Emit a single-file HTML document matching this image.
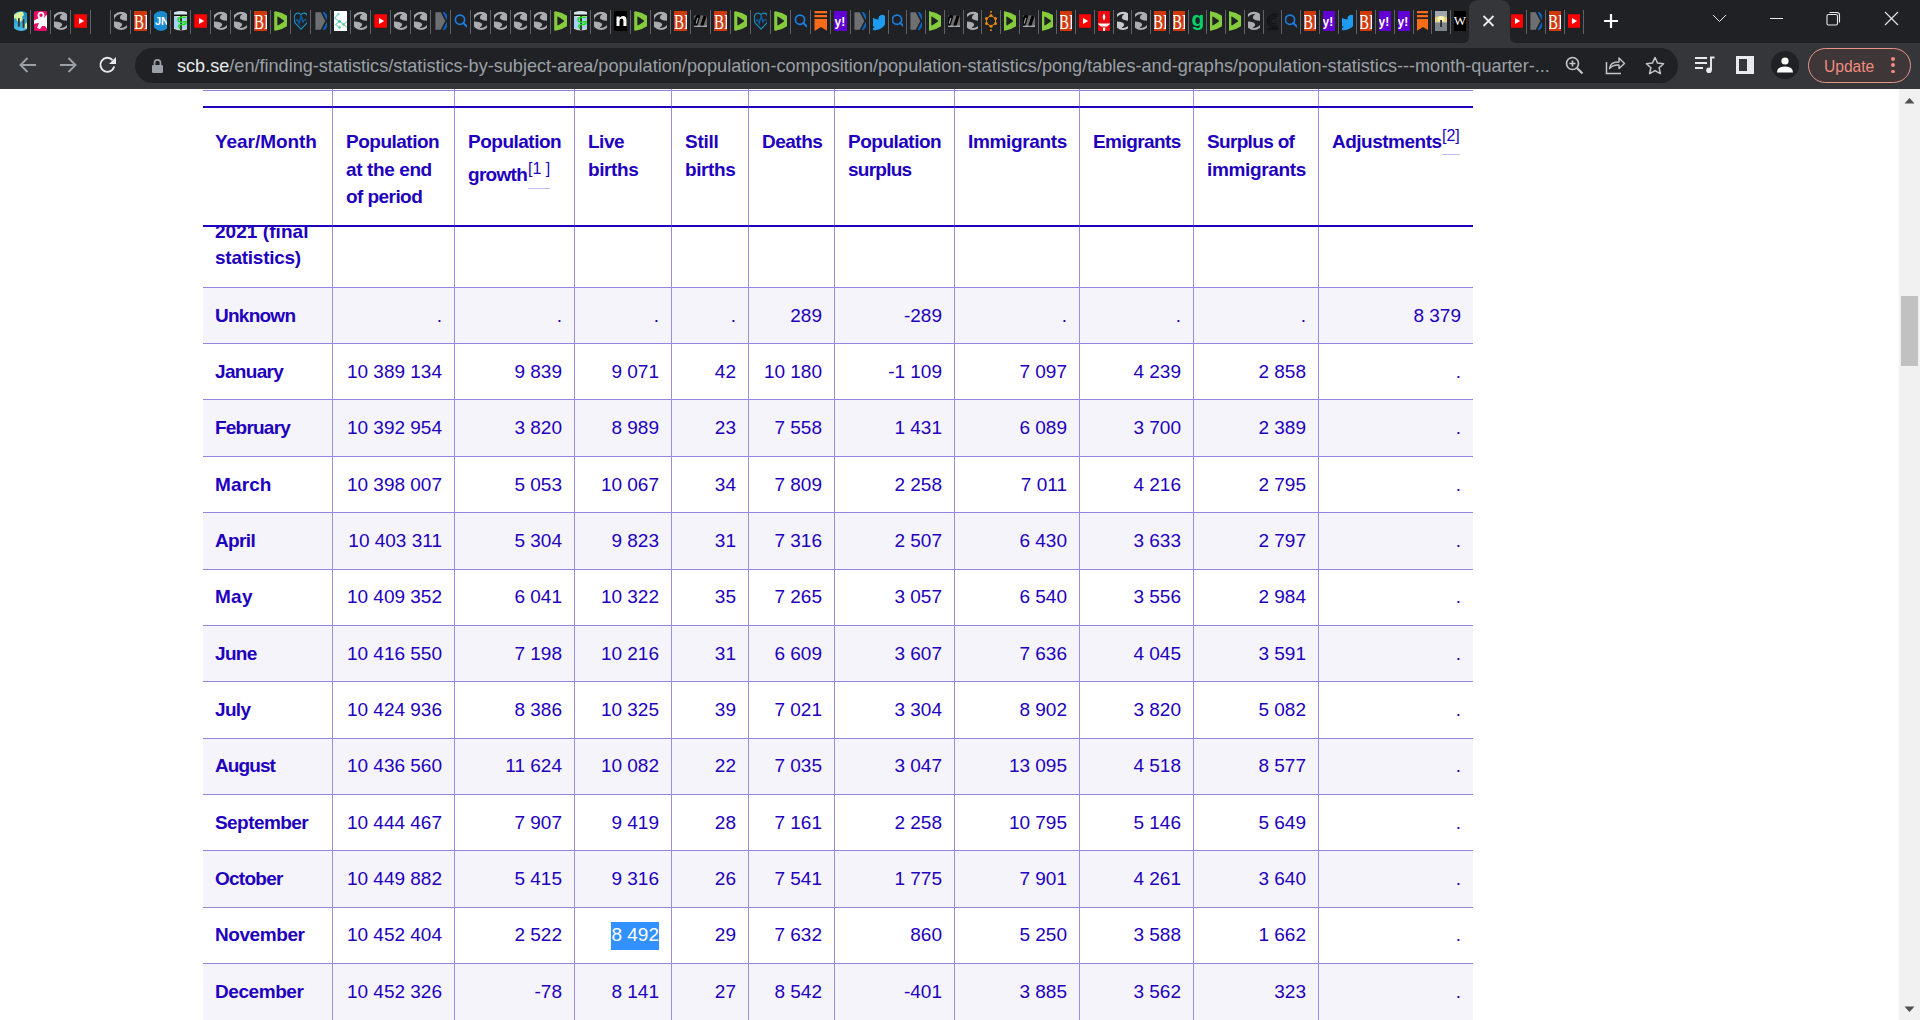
<!DOCTYPE html><html><head><meta charset="utf-8"><style>
*{margin:0;padding:0;box-sizing:border-box}
html,body{width:1920px;height:1020px;overflow:hidden;background:#fff}
body{position:relative;font-family:"Liberation Sans",sans-serif}
.a{position:absolute}
#tabs{left:0;top:0;width:1920px;height:43px;background:#202124}
#tb{left:0;top:43px;width:1920px;height:46px;background:#35363a}
.sep{position:absolute;top:10px;width:1px;height:24px;background:#5f6368}
.fav{position:absolute;top:11px;height:20px;overflow:hidden}
.fav svg{position:absolute;top:0;width:20px;height:20px}
.t{position:absolute;white-space:nowrap;color:#1e00be;font-size:19px;line-height:27px}
.b{font-weight:bold}
.r{text-align:right}
.hl{position:absolute;height:1px;background:#9384de}
.vl{position:absolute;width:1px;background:#9a8ee3}
</style></head><body><div id="tabs" class="a"><div class="sep" style="left:30px"></div><div class="sep" style="left:50px"></div><div class="sep" style="left:70px"></div><div class="sep" style="left:90px"></div><div class="sep" style="left:110px"></div><div class="sep" style="left:130px"></div><div class="sep" style="left:150px"></div><div class="sep" style="left:170px"></div><div class="sep" style="left:190px"></div><div class="sep" style="left:210px"></div><div class="sep" style="left:230px"></div><div class="sep" style="left:250px"></div><div class="sep" style="left:270px"></div><div class="sep" style="left:290px"></div><div class="sep" style="left:310px"></div><div class="sep" style="left:330px"></div><div class="sep" style="left:350px"></div><div class="sep" style="left:370px"></div><div class="sep" style="left:390px"></div><div class="sep" style="left:410px"></div><div class="sep" style="left:430px"></div><div class="sep" style="left:450px"></div><div class="sep" style="left:470px"></div><div class="sep" style="left:490px"></div><div class="sep" style="left:510px"></div><div class="sep" style="left:530px"></div><div class="sep" style="left:550px"></div><div class="sep" style="left:570px"></div><div class="sep" style="left:590px"></div><div class="sep" style="left:610px"></div><div class="sep" style="left:630px"></div><div class="sep" style="left:650px"></div><div class="sep" style="left:670px"></div><div class="sep" style="left:690px"></div><div class="sep" style="left:710px"></div><div class="sep" style="left:730px"></div><div class="sep" style="left:750px"></div><div class="sep" style="left:770px"></div><div class="sep" style="left:790px"></div><div class="sep" style="left:810px"></div><div class="sep" style="left:830px"></div><div class="sep" style="left:850px"></div><div class="sep" style="left:869px"></div><div class="sep" style="left:888px"></div><div class="sep" style="left:906px"></div><div class="sep" style="left:925px"></div><div class="sep" style="left:944px"></div><div class="sep" style="left:963px"></div><div class="sep" style="left:981px"></div><div class="sep" style="left:1000px"></div><div class="sep" style="left:1019px"></div><div class="sep" style="left:1038px"></div><div class="sep" style="left:1056px"></div><div class="sep" style="left:1075px"></div><div class="sep" style="left:1094px"></div><div class="sep" style="left:1113px"></div><div class="sep" style="left:1131px"></div><div class="sep" style="left:1150px"></div><div class="sep" style="left:1169px"></div><div class="sep" style="left:1188px"></div><div class="sep" style="left:1206px"></div><div class="sep" style="left:1225px"></div><div class="sep" style="left:1244px"></div><div class="sep" style="left:1263px"></div><div class="sep" style="left:1281px"></div><div class="sep" style="left:1300px"></div><div class="sep" style="left:1319px"></div><div class="sep" style="left:1338px"></div><div class="sep" style="left:1356px"></div><div class="sep" style="left:1375px"></div><div class="sep" style="left:1394px"></div><div class="sep" style="left:1413px"></div><div class="sep" style="left:1431px"></div><div class="sep" style="left:1450px"></div><div class="sep" style="left:1526px"></div><div class="sep" style="left:1545px"></div><div class="sep" style="left:1564px"></div><div class="sep" style="left:1583px"></div><div class="fav" style="left:14.0px;width:13.0px"><svg viewBox="0 0 20 20" style="left:-3.5px"><defs><linearGradient id="gg" x1="0" y1="0" x2="0" y2="1"><stop offset="0" stop-color="#1487b8"/><stop offset="1" stop-color="#4cc0ea"/></linearGradient></defs><circle cx="10" cy="10" r="10" fill="url(#gg)"/><path d="M3 4q4-4 9-3l1 3-2 2 1 3-3 2-3-1-1-3-3 1z" fill="#d8f0a0"/><path d="M14 13l4-3 1 4-3 4-2-1z" fill="#d8f0a0"/><rect x="7" y="7" width="1.8" height="9" rx=".9" fill="#3a3232"/><rect x="11.6" y="8" width="1.8" height="9" rx=".9" fill="#3a3232"/></svg></div><div class="fav" style="left:34.0px;width:13.0px"><svg viewBox="0 0 20 20" style="left:-3.5px"><rect x="0" y="0" width="20" height="20" rx="6" fill="#ea0a6a"/><circle cx="10" cy="4.2" r="2.6" fill="none" stroke="#fff" stroke-width="1.8"/><path d="M2 10l6-3h5l5-6 2 2-4 6v3l4 5-3 2-3-4h-3l-2 3-3-1 2-5-6 1z" fill="#fff"/></svg></div><div class="fav" style="left:54.0px;width:13.0px"><svg viewBox="0 0 20 20" style="left:-3.5px"><circle cx="10" cy="9.9" r="9.1" fill="#a9acb1"/><path d="M3.1 10.4A6.9 6.9 0 0 1 11.4 3.1Q8.5 4.7 9 7.3Q10 9.6 16.9 9.8L16.9 11.5A6.9 6.9 0 0 1 8.7 16.8Q11.7 15.3 11 13Q10 10.7 3.1 10.4Z" fill="#202124"/></svg></div><div class="fav" style="left:74.0px;width:13.0px"><svg viewBox="0 0 20 20" style="left:-3.5px"><rect x="3.2" y="3.2" width="13.6" height="13.6" rx="1" fill="#f00"/><path d="M8 7l5.2 3L8 13z" fill="#fff"/></svg></div><div class="fav" style="left:114.0px;width:13.0px"><svg viewBox="0 0 20 20" style="left:-3.5px"><circle cx="10" cy="9.9" r="9.1" fill="#a9acb1"/><path d="M3.1 10.4A6.9 6.9 0 0 1 11.4 3.1Q8.5 4.7 9 7.3Q10 9.6 16.9 9.8L16.9 11.5A6.9 6.9 0 0 1 8.7 16.8Q11.7 15.3 11 13Q10 10.7 3.1 10.4Z" fill="#202124"/></svg></div><div class="fav" style="left:134.0px;width:13.0px"><svg viewBox="0 0 20 20" style="left:-3.5px"><rect x="0" y="0" width="20" height="20" fill="#cf3a0c"/><text x="3" y="17.6" font-family="Liberation Serif" font-size="20.5" fill="#fff" textLength="15" lengthAdjust="spacingAndGlyphs">BI</text></svg></div><div class="fav" style="left:154.0px;width:13.0px"><svg viewBox="0 0 20 20" style="left:-3.5px"><ellipse cx="10" cy="10" rx="9.2" ry="10" fill="#1a8cd2"/><text x="10.8" y="14.3" font-family="Liberation Sans" font-size="11" font-weight="bold" fill="#fff" text-anchor="middle" letter-spacing="-.3">JN</text></svg></div><div class="fav" style="left:174.0px;width:13.0px"><svg viewBox="0 0 20 20" style="left:-3.5px"><path d="M2 3.5h16v13.5q-8 4-16 0z" fill="#a8d0f6" stroke="#f0ead8" stroke-width=".8"/><ellipse cx="10" cy="3.2" rx="8" ry="2.6" fill="#cfe6fb" stroke="#f6f0e0" stroke-width=".9"/><path d="M3 4.3h14" stroke="#15120a" stroke-width="1.5"/><path d="M10 5v14" stroke="#2a2216" stroke-width="1.8"/><path d="M15.5 6.5q-9-1-8.5 2.5t8 1.5q1 3-4 3t-2 4" stroke="#22dd22" stroke-width="1.6" fill="none"/></svg></div><div class="fav" style="left:194.0px;width:13.0px"><svg viewBox="0 0 20 20" style="left:-3.5px"><rect x="3.2" y="3.2" width="13.6" height="13.6" rx="1" fill="#f00"/><path d="M8 7l5.2 3L8 13z" fill="#fff"/></svg></div><div class="fav" style="left:214.0px;width:13.0px"><svg viewBox="0 0 20 20" style="left:-3.5px"><circle cx="10" cy="9.9" r="9.1" fill="#a9acb1"/><path d="M3.1 10.4A6.9 6.9 0 0 1 11.4 3.1Q8.5 4.7 9 7.3Q10 9.6 16.9 9.8L16.9 11.5A6.9 6.9 0 0 1 8.7 16.8Q11.7 15.3 11 13Q10 10.7 3.1 10.4Z" fill="#202124"/></svg></div><div class="fav" style="left:234.0px;width:13.0px"><svg viewBox="0 0 20 20" style="left:-3.5px"><circle cx="10" cy="9.9" r="9.1" fill="#a9acb1"/><path d="M3.1 10.4A6.9 6.9 0 0 1 11.4 3.1Q8.5 4.7 9 7.3Q10 9.6 16.9 9.8L16.9 11.5A6.9 6.9 0 0 1 8.7 16.8Q11.7 15.3 11 13Q10 10.7 3.1 10.4Z" fill="#202124"/></svg></div><div class="fav" style="left:254.0px;width:13.0px"><svg viewBox="0 0 20 20" style="left:-3.5px"><rect x="0" y="0" width="20" height="20" fill="#cf3a0c"/><text x="3" y="17.6" font-family="Liberation Serif" font-size="20.5" fill="#fff" textLength="15" lengthAdjust="spacingAndGlyphs">BI</text></svg></div><div class="fav" style="left:274.0px;width:13.0px"><svg viewBox="0 0 20 20" style="left:-3.5px"><path d="M4.6 0.2Q3.2 0.2 3.2 1.6V18.4Q3.2 19.8 4.6 19.8Q12 18.4 16.6 14.8V5.2Q12 1.6 4.6 0.2Z" fill="#84cc3c"/><path d="M6.3 6.4Q6.3 5.2 7.4 5.8L12.6 9.2Q13.6 10 12.6 10.8L7.4 14.2Q6.3 14.8 6.3 13.6Z" fill="#202124"/></svg></div><div class="fav" style="left:294.0px;width:13.0px"><svg viewBox="0 0 20 20" style="left:-3.5px"><path d="M10 18.2L4.5 12.4Q3.3 10.9 3.3 7.5Q3.3 2.1 6.9 2.1Q9 2.1 10 3.7Q11 2.1 13.1 2.1Q16.7 2.1 16.7 7.5Q16.7 10.9 15.5 12.4Z" fill="none" stroke="#1a94c8" stroke-width="1.1"/><path d="M5 9.8L6.6 8.8L8.1 12.4L10.2 4.8L11.9 11L13.2 8.9H15.6" fill="none" stroke="#0f5ea8" stroke-width="1.3"/></svg></div><div class="fav" style="left:314.0px;width:13.0px"><svg viewBox="0 0 20 20" style="left:-3.5px"><path d="M4.4 1.2h5.3l4.6 8.8-4.6 8.8H4.4z" fill="#6e6f73"/><path d="M11.6 1H13.3Q16.4 3 16.4 6.5V8.9L15.5 8.7Z" fill="#0a64c0"/><path d="M11.6 19H13.3Q16.4 17 16.4 13.5V11.1L15.5 11.3Z" fill="#0a64c0"/></svg></div><div class="fav" style="left:334.0px;width:13.0px"><svg viewBox="0 0 20 20" style="left:-3.5px"><rect x="0" y="0" width="20" height="20" fill="#fff"/><path d="M7.5 3L3.5 7l5 3.5-4 3 4 3M8.5 10.5l4 3 4-3.5M12.5 13.5l4 3" stroke="#8ed8c8" stroke-width="1.2" fill="none"/><circle cx="7.5" cy="3" r="1.2" fill="#7cd0e0"/><circle cx="8.5" cy="10.5" r="1.3" fill="#2ec0b0"/><circle cx="12.5" cy="13.5" r="1.3" fill="#62cc78"/><circle cx="8.5" cy="16.5" r="1.3" fill="#58cc90"/></svg></div><div class="fav" style="left:354.0px;width:13.0px"><svg viewBox="0 0 20 20" style="left:-3.5px"><circle cx="10" cy="9.9" r="9.1" fill="#a9acb1"/><path d="M3.1 10.4A6.9 6.9 0 0 1 11.4 3.1Q8.5 4.7 9 7.3Q10 9.6 16.9 9.8L16.9 11.5A6.9 6.9 0 0 1 8.7 16.8Q11.7 15.3 11 13Q10 10.7 3.1 10.4Z" fill="#202124"/></svg></div><div class="fav" style="left:374.0px;width:13.0px"><svg viewBox="0 0 20 20" style="left:-3.5px"><rect x="3.2" y="3.2" width="13.6" height="13.6" rx="1" fill="#f00"/><path d="M8 7l5.2 3L8 13z" fill="#fff"/></svg></div><div class="fav" style="left:394.0px;width:13.0px"><svg viewBox="0 0 20 20" style="left:-3.5px"><circle cx="10" cy="9.9" r="9.1" fill="#a9acb1"/><path d="M3.1 10.4A6.9 6.9 0 0 1 11.4 3.1Q8.5 4.7 9 7.3Q10 9.6 16.9 9.8L16.9 11.5A6.9 6.9 0 0 1 8.7 16.8Q11.7 15.3 11 13Q10 10.7 3.1 10.4Z" fill="#202124"/></svg></div><div class="fav" style="left:414.0px;width:13.0px"><svg viewBox="0 0 20 20" style="left:-3.5px"><circle cx="10" cy="9.9" r="9.1" fill="#a9acb1"/><path d="M3.1 10.4A6.9 6.9 0 0 1 11.4 3.1Q8.5 4.7 9 7.3Q10 9.6 16.9 9.8L16.9 11.5A6.9 6.9 0 0 1 8.7 16.8Q11.7 15.3 11 13Q10 10.7 3.1 10.4Z" fill="#202124"/></svg></div><div class="fav" style="left:434.0px;width:13.0px"><svg viewBox="0 0 20 20" style="left:-3.5px"><path d="M4.4 1.2h5.3l4.6 8.8-4.6 8.8H4.4z" fill="#6e6f73"/><path d="M11.6 1H13.3Q16.4 3 16.4 6.5V8.9L15.5 8.7Z" fill="#0a64c0"/><path d="M11.6 19H13.3Q16.4 17 16.4 13.5V11.1L15.5 11.3Z" fill="#0a64c0"/></svg></div><div class="fav" style="left:454.0px;width:13.0px"><svg viewBox="0 0 20 20" style="left:-3.5px"><circle cx="9" cy="8.7" r="4.6" fill="none" stroke="#1a7ee0" stroke-width="1.7"/><path d="M12.3 12l3.6 3.6" stroke="#1a7ee0" stroke-width="1.9" stroke-linecap="round"/></svg></div><div class="fav" style="left:474.0px;width:13.0px"><svg viewBox="0 0 20 20" style="left:-3.5px"><circle cx="10" cy="9.9" r="9.1" fill="#a9acb1"/><path d="M3.1 10.4A6.9 6.9 0 0 1 11.4 3.1Q8.5 4.7 9 7.3Q10 9.6 16.9 9.8L16.9 11.5A6.9 6.9 0 0 1 8.7 16.8Q11.7 15.3 11 13Q10 10.7 3.1 10.4Z" fill="#202124"/></svg></div><div class="fav" style="left:494.0px;width:13.0px"><svg viewBox="0 0 20 20" style="left:-3.5px"><circle cx="10" cy="9.9" r="9.1" fill="#a9acb1"/><path d="M3.1 10.4A6.9 6.9 0 0 1 11.4 3.1Q8.5 4.7 9 7.3Q10 9.6 16.9 9.8L16.9 11.5A6.9 6.9 0 0 1 8.7 16.8Q11.7 15.3 11 13Q10 10.7 3.1 10.4Z" fill="#202124"/></svg></div><div class="fav" style="left:514.0px;width:13.0px"><svg viewBox="0 0 20 20" style="left:-3.5px"><circle cx="10" cy="9.9" r="9.1" fill="#a9acb1"/><path d="M3.1 10.4A6.9 6.9 0 0 1 11.4 3.1Q8.5 4.7 9 7.3Q10 9.6 16.9 9.8L16.9 11.5A6.9 6.9 0 0 1 8.7 16.8Q11.7 15.3 11 13Q10 10.7 3.1 10.4Z" fill="#202124"/></svg></div><div class="fav" style="left:534.0px;width:13.0px"><svg viewBox="0 0 20 20" style="left:-3.5px"><circle cx="10" cy="9.9" r="9.1" fill="#a9acb1"/><path d="M3.1 10.4A6.9 6.9 0 0 1 11.4 3.1Q8.5 4.7 9 7.3Q10 9.6 16.9 9.8L16.9 11.5A6.9 6.9 0 0 1 8.7 16.8Q11.7 15.3 11 13Q10 10.7 3.1 10.4Z" fill="#202124"/></svg></div><div class="fav" style="left:554.0px;width:13.0px"><svg viewBox="0 0 20 20" style="left:-3.5px"><path d="M4.6 0.2Q3.2 0.2 3.2 1.6V18.4Q3.2 19.8 4.6 19.8Q12 18.4 16.6 14.8V5.2Q12 1.6 4.6 0.2Z" fill="#84cc3c"/><path d="M6.3 6.4Q6.3 5.2 7.4 5.8L12.6 9.2Q13.6 10 12.6 10.8L7.4 14.2Q6.3 14.8 6.3 13.6Z" fill="#202124"/></svg></div><div class="fav" style="left:574.0px;width:13.0px"><svg viewBox="0 0 20 20" style="left:-3.5px"><path d="M2 3.5h16v13.5q-8 4-16 0z" fill="#a8d0f6" stroke="#f0ead8" stroke-width=".8"/><ellipse cx="10" cy="3.2" rx="8" ry="2.6" fill="#cfe6fb" stroke="#f6f0e0" stroke-width=".9"/><path d="M3 4.3h14" stroke="#15120a" stroke-width="1.5"/><path d="M10 5v14" stroke="#2a2216" stroke-width="1.8"/><path d="M15.5 6.5q-9-1-8.5 2.5t8 1.5q1 3-4 3t-2 4" stroke="#22dd22" stroke-width="1.6" fill="none"/></svg></div><div class="fav" style="left:594.0px;width:13.0px"><svg viewBox="0 0 20 20" style="left:-3.5px"><circle cx="10" cy="9.9" r="9.1" fill="#a9acb1"/><path d="M3.1 10.4A6.9 6.9 0 0 1 11.4 3.1Q8.5 4.7 9 7.3Q10 9.6 16.9 9.8L16.9 11.5A6.9 6.9 0 0 1 8.7 16.8Q11.7 15.3 11 13Q10 10.7 3.1 10.4Z" fill="#202124"/></svg></div><div class="fav" style="left:614.0px;width:13.0px"><svg viewBox="0 0 20 20" style="left:-3.5px"><rect x="0" y="0" width="20" height="20" rx="6" fill="#000"/><path d="M5.5 5.5h3v1.6q1.5-2 3.6-2 3.4 0 3.4 3.8V15h-3.1V9.5q0-1.9-1.7-1.9-2.2 0-2.2 2.6V15h-3z" fill="#fff"/></svg></div><div class="fav" style="left:634.0px;width:13.0px"><svg viewBox="0 0 20 20" style="left:-3.5px"><path d="M4.6 0.2Q3.2 0.2 3.2 1.6V18.4Q3.2 19.8 4.6 19.8Q12 18.4 16.6 14.8V5.2Q12 1.6 4.6 0.2Z" fill="#84cc3c"/><path d="M6.3 6.4Q6.3 5.2 7.4 5.8L12.6 9.2Q13.6 10 12.6 10.8L7.4 14.2Q6.3 14.8 6.3 13.6Z" fill="#202124"/></svg></div><div class="fav" style="left:654.0px;width:13.0px"><svg viewBox="0 0 20 20" style="left:-3.5px"><circle cx="10" cy="9.9" r="9.1" fill="#a9acb1"/><path d="M3.1 10.4A6.9 6.9 0 0 1 11.4 3.1Q8.5 4.7 9 7.3Q10 9.6 16.9 9.8L16.9 11.5A6.9 6.9 0 0 1 8.7 16.8Q11.7 15.3 11 13Q10 10.7 3.1 10.4Z" fill="#202124"/></svg></div><div class="fav" style="left:674.0px;width:13.0px"><svg viewBox="0 0 20 20" style="left:-3.5px"><rect x="0" y="0" width="20" height="20" fill="#cf3a0c"/><text x="3" y="17.6" font-family="Liberation Serif" font-size="20.5" fill="#fff" textLength="15" lengthAdjust="spacingAndGlyphs">BI</text></svg></div><div class="fav" style="left:694.0px;width:13.0px"><svg viewBox="0 0 20 20" style="left:-3.5px"><rect x="0" y="4.5" width="20" height="11.5" fill="#6a6a6a"/><path d="M0 4.5h3l-3 9z" fill="#d0d0d0"/><path d="M3.5 15.5q-2 0-1.2-3.5l1.5-5q1-3 3-3h1q2 0 1 3l-1.5 5q-1 3.5-3 3.5zM9 15.5l3.6-11h3.2l-3.6 11z" fill="#050505"/><path d="M5.2 12.5l1.6-5.5" stroke="#9a9a9a" stroke-width="1.2"/><rect x="0" y="14.6" width="20" height="1.4" fill="#c8c8c8" opacity=".7"/></svg></div><div class="fav" style="left:714.0px;width:13.0px"><svg viewBox="0 0 20 20" style="left:-3.5px"><rect x="0" y="0" width="20" height="20" fill="#cf3a0c"/><text x="3" y="17.6" font-family="Liberation Serif" font-size="20.5" fill="#fff" textLength="15" lengthAdjust="spacingAndGlyphs">BI</text></svg></div><div class="fav" style="left:734.0px;width:13.0px"><svg viewBox="0 0 20 20" style="left:-3.5px"><path d="M4.6 0.2Q3.2 0.2 3.2 1.6V18.4Q3.2 19.8 4.6 19.8Q12 18.4 16.6 14.8V5.2Q12 1.6 4.6 0.2Z" fill="#84cc3c"/><path d="M6.3 6.4Q6.3 5.2 7.4 5.8L12.6 9.2Q13.6 10 12.6 10.8L7.4 14.2Q6.3 14.8 6.3 13.6Z" fill="#202124"/></svg></div><div class="fav" style="left:754.0px;width:13.0px"><svg viewBox="0 0 20 20" style="left:-3.5px"><path d="M10 18.2L4.5 12.4Q3.3 10.9 3.3 7.5Q3.3 2.1 6.9 2.1Q9 2.1 10 3.7Q11 2.1 13.1 2.1Q16.7 2.1 16.7 7.5Q16.7 10.9 15.5 12.4Z" fill="none" stroke="#1a94c8" stroke-width="1.1"/><path d="M5 9.8L6.6 8.8L8.1 12.4L10.2 4.8L11.9 11L13.2 8.9H15.6" fill="none" stroke="#0f5ea8" stroke-width="1.3"/></svg></div><div class="fav" style="left:774.0px;width:13.0px"><svg viewBox="0 0 20 20" style="left:-3.5px"><path d="M4.6 0.2Q3.2 0.2 3.2 1.6V18.4Q3.2 19.8 4.6 19.8Q12 18.4 16.6 14.8V5.2Q12 1.6 4.6 0.2Z" fill="#84cc3c"/><path d="M6.3 6.4Q6.3 5.2 7.4 5.8L12.6 9.2Q13.6 10 12.6 10.8L7.4 14.2Q6.3 14.8 6.3 13.6Z" fill="#202124"/></svg></div><div class="fav" style="left:794.0px;width:13.0px"><svg viewBox="0 0 20 20" style="left:-3.5px"><circle cx="9" cy="8.7" r="4.6" fill="none" stroke="#1a7ee0" stroke-width="1.7"/><path d="M12.3 12l3.6 3.6" stroke="#1a7ee0" stroke-width="1.9" stroke-linecap="round"/></svg></div><div class="fav" style="left:814.0px;width:13.0px"><svg viewBox="0 0 20 20" style="left:-3.5px"><rect x="3.5" y="0" width="13" height="2.3" fill="#fa6c17"/><rect x="3.5" y="4" width="13" height="2.3" fill="#fa6c17"/><path d="M3.5 8h13v12l-6.5-4-6.5 4z" fill="#fa6c17"/></svg></div><div class="fav" style="left:834.0px;width:13.0px"><svg viewBox="0 0 20 20" style="left:-3.5px"><rect x="0" y="0" width="20" height="20" fill="#6001d2"/><text x="8.8" y="14.5" font-family="Liberation Sans" font-weight="bold" font-size="12" fill="#fff" text-anchor="middle">y!</text></svg></div><div class="fav" style="left:853.6px;width:12.0px"><svg viewBox="0 0 20 20" style="left:-3.6px"><path d="M4.4 1.2h5.3l4.6 8.8-4.6 8.8H4.4z" fill="#6e6f73"/><path d="M11.6 1H13.3Q16.4 3 16.4 6.5V8.9L15.5 8.7Z" fill="#0a64c0"/><path d="M11.6 19H13.3Q16.4 17 16.4 13.5V11.1L15.5 11.3Z" fill="#0a64c0"/></svg></div><div class="fav" style="left:872.6px;width:12.0px"><svg viewBox="0 0 20 20" style="left:-3.6px"><path d="M19 5.5q-1 .5-2.2.6 1.2-.8 1.6-2-1.1.6-2.3.9A3.9 3.9 0 0 0 9.5 8.5 11 11 0 0 1 1.6 4.4a3.9 3.9 0 0 0 1.2 5.2q-.9 0-1.7-.5 0 3.1 3.1 3.9-.9.3-1.8.1.9 2.5 3.6 2.7A7.8 7.8 0 0 1 .5 17.4 11 11 0 0 0 17.3 7.6v-.5q1.1-.7 1.7-1.6z" fill="#1d9bf0"/><rect x="2" y="0" width="1" height="3.2" fill="#e0107a"/></svg></div><div class="fav" style="left:891.6px;width:11.0px"><svg viewBox="0 0 20 20" style="left:-4.1px"><circle cx="9" cy="8.7" r="4.6" fill="none" stroke="#1a7ee0" stroke-width="1.7"/><path d="M12.3 12l3.6 3.6" stroke="#1a7ee0" stroke-width="1.9" stroke-linecap="round"/></svg></div><div class="fav" style="left:909.6px;width:12.0px"><svg viewBox="0 0 20 20" style="left:-3.6px"><path d="M4.4 1.2h5.3l4.6 8.8-4.6 8.8H4.4z" fill="#6e6f73"/><path d="M11.6 1H13.3Q16.4 3 16.4 6.5V8.9L15.5 8.7Z" fill="#0a64c0"/><path d="M11.6 19H13.3Q16.4 17 16.4 13.5V11.1L15.5 11.3Z" fill="#0a64c0"/></svg></div><div class="fav" style="left:928.6px;width:12.0px"><svg viewBox="0 0 20 20" style="left:-3.6px"><path d="M4.6 0.2Q3.2 0.2 3.2 1.6V18.4Q3.2 19.8 4.6 19.8Q12 18.4 16.6 14.8V5.2Q12 1.6 4.6 0.2Z" fill="#84cc3c"/><path d="M6.3 6.4Q6.3 5.2 7.4 5.8L12.6 9.2Q13.6 10 12.6 10.8L7.4 14.2Q6.3 14.8 6.3 13.6Z" fill="#202124"/></svg></div><div class="fav" style="left:947.6px;width:12.0px"><svg viewBox="0 0 20 20" style="left:-3.6px"><rect x="0" y="4.5" width="20" height="11.5" fill="#6a6a6a"/><path d="M0 4.5h3l-3 9z" fill="#d0d0d0"/><path d="M3.5 15.5q-2 0-1.2-3.5l1.5-5q1-3 3-3h1q2 0 1 3l-1.5 5q-1 3.5-3 3.5zM9 15.5l3.6-11h3.2l-3.6 11z" fill="#050505"/><path d="M5.2 12.5l1.6-5.5" stroke="#9a9a9a" stroke-width="1.2"/><rect x="0" y="14.6" width="20" height="1.4" fill="#c8c8c8" opacity=".7"/></svg></div><div class="fav" style="left:966.6px;width:11.0px"><svg viewBox="0 0 20 20" style="left:-4.1px"><circle cx="10" cy="9.9" r="9.1" fill="#a9acb1"/><path d="M3.1 10.4A6.9 6.9 0 0 1 11.4 3.1Q8.5 4.7 9 7.3Q10 9.6 16.9 9.8L16.9 11.5A6.9 6.9 0 0 1 8.7 16.8Q11.7 15.3 11 13Q10 10.7 3.1 10.4Z" fill="#202124"/></svg></div><div class="fav" style="left:984.6px;width:12.0px"><svg viewBox="0 0 20 20" style="left:-3.6px"><g fill="#e8890f"><circle cx="10" cy="4.5" r="1.5"/><circle cx="14.5" cy="7.5" r="1.5"/><circle cx="14.5" cy="12.5" r="1.5"/><circle cx="10" cy="15.2" r="1.5"/><circle cx="5.5" cy="12.5" r="1.5"/><circle cx="5.5" cy="7.5" r="1.5"/><circle cx="2" cy="1" r="1"/><circle cx="18" cy="1" r="1"/><circle cx="2" cy="19" r="1"/><circle cx="18" cy="19" r="1"/><circle cx="10" cy="0.8" r="1"/><circle cx="10" cy="19.2" r="1"/></g><path d="M10 4.5l4.5 3v5L10 15.2l-4.5-2.7v-5z" fill="none" stroke="#e8890f" stroke-width="1"/></svg></div><div class="fav" style="left:1003.6px;width:12.0px"><svg viewBox="0 0 20 20" style="left:-3.6px"><path d="M4.6 0.2Q3.2 0.2 3.2 1.6V18.4Q3.2 19.8 4.6 19.8Q12 18.4 16.6 14.8V5.2Q12 1.6 4.6 0.2Z" fill="#84cc3c"/><path d="M6.3 6.4Q6.3 5.2 7.4 5.8L12.6 9.2Q13.6 10 12.6 10.8L7.4 14.2Q6.3 14.8 6.3 13.6Z" fill="#202124"/></svg></div><div class="fav" style="left:1022.6px;width:12.0px"><svg viewBox="0 0 20 20" style="left:-3.6px"><rect x="0" y="4.5" width="20" height="11.5" fill="#6a6a6a"/><path d="M0 4.5h3l-3 9z" fill="#d0d0d0"/><path d="M3.5 15.5q-2 0-1.2-3.5l1.5-5q1-3 3-3h1q2 0 1 3l-1.5 5q-1 3.5-3 3.5zM9 15.5l3.6-11h3.2l-3.6 11z" fill="#050505"/><path d="M5.2 12.5l1.6-5.5" stroke="#9a9a9a" stroke-width="1.2"/><rect x="0" y="14.6" width="20" height="1.4" fill="#c8c8c8" opacity=".7"/></svg></div><div class="fav" style="left:1041.6px;width:11.0px"><svg viewBox="0 0 20 20" style="left:-4.1px"><path d="M4.6 0.2Q3.2 0.2 3.2 1.6V18.4Q3.2 19.8 4.6 19.8Q12 18.4 16.6 14.8V5.2Q12 1.6 4.6 0.2Z" fill="#84cc3c"/><path d="M6.3 6.4Q6.3 5.2 7.4 5.8L12.6 9.2Q13.6 10 12.6 10.8L7.4 14.2Q6.3 14.8 6.3 13.6Z" fill="#202124"/></svg></div><div class="fav" style="left:1059.6px;width:12.0px"><svg viewBox="0 0 20 20" style="left:-3.6px"><rect x="0" y="0" width="20" height="20" fill="#cf3a0c"/><text x="3" y="17.6" font-family="Liberation Serif" font-size="20.5" fill="#fff" textLength="15" lengthAdjust="spacingAndGlyphs">BI</text></svg></div><div class="fav" style="left:1078.6px;width:12.0px"><svg viewBox="0 0 20 20" style="left:-3.6px"><rect x="3.2" y="3.2" width="13.6" height="13.6" rx="1" fill="#f00"/><path d="M8 7l5.2 3L8 13z" fill="#fff"/></svg></div><div class="fav" style="left:1097.6px;width:12.0px"><svg viewBox="0 0 20 20" style="left:-3.6px"><rect x="0" y="0" width="20" height="20" fill="#e80a10"/><path d="M10.4 2.8q2.6 2.8 0 5.9q-2.6-3.1 0-5.9z" fill="#fff" transform="translate(-.4,0) scale(1,1.2) translate(0,-.8)"/><path d="M3.5 12.5h13l-3.5 3h-6z" fill="#fff"/><path d="M8.8 16.5h2.6l-.4 3.5h-1.8z" fill="#fff"/></svg></div><div class="fav" style="left:1116.6px;width:11.0px"><svg viewBox="0 0 20 20" style="left:-4.1px"><circle cx="10" cy="9.9" r="9.1" fill="#c6c8cb"/><path d="M3.1 10.4A6.9 6.9 0 0 1 11.4 3.1Q8.5 4.7 9 7.3Q10 9.6 16.9 9.8L16.9 11.5A6.9 6.9 0 0 1 8.7 16.8Q11.7 15.3 11 13Q10 10.7 3.1 10.4Z" fill="#202124"/></svg></div><div class="fav" style="left:1134.6px;width:12.0px"><svg viewBox="0 0 20 20" style="left:-3.6px"><circle cx="10" cy="9.9" r="9.1" fill="#a9acb1"/><path d="M3.1 10.4A6.9 6.9 0 0 1 11.4 3.1Q8.5 4.7 9 7.3Q10 9.6 16.9 9.8L16.9 11.5A6.9 6.9 0 0 1 8.7 16.8Q11.7 15.3 11 13Q10 10.7 3.1 10.4Z" fill="#202124"/></svg></div><div class="fav" style="left:1153.6px;width:12.0px"><svg viewBox="0 0 20 20" style="left:-3.6px"><rect x="0" y="0" width="20" height="20" fill="#cf3a0c"/><text x="3" y="17.6" font-family="Liberation Serif" font-size="20.5" fill="#fff" textLength="15" lengthAdjust="spacingAndGlyphs">BI</text></svg></div><div class="fav" style="left:1172.6px;width:12.0px"><svg viewBox="0 0 20 20" style="left:-3.6px"><rect x="0" y="0" width="20" height="20" fill="#cf3a0c"/><text x="3" y="17.6" font-family="Liberation Serif" font-size="20.5" fill="#fff" textLength="15" lengthAdjust="spacingAndGlyphs">BI</text></svg></div><div class="fav" style="left:1191.6px;width:11.0px"><svg viewBox="0 0 20 20" style="left:-4.1px"><text x="10" y="15.2" font-family="Liberation Sans" font-weight="bold" font-size="21" fill="#00d26a" text-anchor="middle">g</text></svg></div><div class="fav" style="left:1209.6px;width:12.0px"><svg viewBox="0 0 20 20" style="left:-3.6px"><path d="M4.6 0.2Q3.2 0.2 3.2 1.6V18.4Q3.2 19.8 4.6 19.8Q12 18.4 16.6 14.8V5.2Q12 1.6 4.6 0.2Z" fill="#84cc3c"/><path d="M6.3 6.4Q6.3 5.2 7.4 5.8L12.6 9.2Q13.6 10 12.6 10.8L7.4 14.2Q6.3 14.8 6.3 13.6Z" fill="#202124"/></svg></div><div class="fav" style="left:1228.6px;width:12.0px"><svg viewBox="0 0 20 20" style="left:-3.6px"><path d="M4.6 0.2Q3.2 0.2 3.2 1.6V18.4Q3.2 19.8 4.6 19.8Q12 18.4 16.6 14.8V5.2Q12 1.6 4.6 0.2Z" fill="#84cc3c"/><path d="M6.3 6.4Q6.3 5.2 7.4 5.8L12.6 9.2Q13.6 10 12.6 10.8L7.4 14.2Q6.3 14.8 6.3 13.6Z" fill="#202124"/></svg></div><div class="fav" style="left:1247.6px;width:12.0px"><svg viewBox="0 0 20 20" style="left:-3.6px"><circle cx="10" cy="9.9" r="9.1" fill="#a9acb1"/><path d="M3.1 10.4A6.9 6.9 0 0 1 11.4 3.1Q8.5 4.7 9 7.3Q10 9.6 16.9 9.8L16.9 11.5A6.9 6.9 0 0 1 8.7 16.8Q11.7 15.3 11 13Q10 10.7 3.1 10.4Z" fill="#202124"/></svg></div><div class="fav" style="left:1266.6px;width:11.0px"><svg viewBox="0 0 20 20" style="left:-4.1px"><path d="M15 4a7 7 0 1 0 0 12M14 6a5 5 0 1 0 0 8M13 8a3 3 0 1 0 0 4" fill="none" stroke="#0e0e0e" stroke-width="1"/><path d="M3 18h12" stroke="#0e0e0e" stroke-width="1.2"/></svg></div><div class="fav" style="left:1284.6px;width:12.0px"><svg viewBox="0 0 20 20" style="left:-3.6px"><circle cx="9" cy="8.7" r="4.6" fill="none" stroke="#1a7ee0" stroke-width="1.7"/><path d="M12.3 12l3.6 3.6" stroke="#1a7ee0" stroke-width="1.9" stroke-linecap="round"/></svg></div><div class="fav" style="left:1303.6px;width:12.0px"><svg viewBox="0 0 20 20" style="left:-3.6px"><rect x="0" y="0" width="20" height="20" fill="#cf3a0c"/><text x="3" y="17.6" font-family="Liberation Serif" font-size="20.5" fill="#fff" textLength="15" lengthAdjust="spacingAndGlyphs">BI</text></svg></div><div class="fav" style="left:1322.6px;width:12.0px"><svg viewBox="0 0 20 20" style="left:-3.6px"><rect x="0" y="0" width="20" height="20" fill="#6001d2"/><text x="8.8" y="14.5" font-family="Liberation Sans" font-weight="bold" font-size="12" fill="#fff" text-anchor="middle">y!</text></svg></div><div class="fav" style="left:1341.6px;width:11.0px"><svg viewBox="0 0 20 20" style="left:-4.1px"><path d="M19 5.5q-1 .5-2.2.6 1.2-.8 1.6-2-1.1.6-2.3.9A3.9 3.9 0 0 0 9.5 8.5 11 11 0 0 1 1.6 4.4a3.9 3.9 0 0 0 1.2 5.2q-.9 0-1.7-.5 0 3.1 3.1 3.9-.9.3-1.8.1.9 2.5 3.6 2.7A7.8 7.8 0 0 1 .5 17.4 11 11 0 0 0 17.3 7.6v-.5q1.1-.7 1.7-1.6z" fill="#1d9bf0"/><rect x="2" y="0" width="1" height="3.2" fill="#e0107a"/></svg></div><div class="fav" style="left:1359.6px;width:12.0px"><svg viewBox="0 0 20 20" style="left:-3.6px"><rect x="0" y="0" width="20" height="20" fill="#cf3a0c"/><text x="3" y="17.6" font-family="Liberation Serif" font-size="20.5" fill="#fff" textLength="15" lengthAdjust="spacingAndGlyphs">BI</text></svg></div><div class="fav" style="left:1378.6px;width:12.0px"><svg viewBox="0 0 20 20" style="left:-3.6px"><rect x="0" y="0" width="20" height="20" fill="#6001d2"/><text x="8.8" y="14.5" font-family="Liberation Sans" font-weight="bold" font-size="12" fill="#fff" text-anchor="middle">y!</text></svg></div><div class="fav" style="left:1397.6px;width:12.0px"><svg viewBox="0 0 20 20" style="left:-3.6px"><rect x="0" y="0" width="20" height="20" fill="#6001d2"/><text x="8.8" y="14.5" font-family="Liberation Sans" font-weight="bold" font-size="12" fill="#fff" text-anchor="middle">y!</text></svg></div><div class="fav" style="left:1416.6px;width:11.0px"><svg viewBox="0 0 20 20" style="left:-4.1px"><rect x="3.5" y="0" width="13" height="2.3" fill="#fa6c17"/><rect x="3.5" y="4" width="13" height="2.3" fill="#fa6c17"/><path d="M3.5 8h13v12l-6.5-4-6.5 4z" fill="#fa6c17"/></svg></div><div class="fav" style="left:1434.6px;width:12.0px"><svg viewBox="0 0 20 20" style="left:-3.6px"><rect x="0" y="0" width="20" height="20" fill="#a0a8ae"/><path d="M2 11q0-6 8-6t8 6z" fill="#ecd480"/><circle cx="10" cy="8" r="3" fill="#fff4c0"/><rect x="0" y="12" width="20" height="8" fill="#7e868c"/><rect x="9.2" y="9" width="1.8" height="7" fill="#2a2a2a"/></svg></div><div class="fav" style="left:1453.6px;width:12.0px"><svg viewBox="0 0 20 20" style="left:-3.6px"><rect x="0" y="0" width="20" height="20" fill="#000"/><text x="10" y="14" font-family="Liberation Serif" font-size="13" fill="#fff" text-anchor="middle">W</text></svg></div><div class="fav" style="left:1510.6px;width:12.0px"><svg viewBox="0 0 20 20" style="left:-3.6px"><rect x="3.2" y="3.2" width="13.6" height="13.6" rx="1" fill="#f00"/><path d="M8 7l5.2 3L8 13z" fill="#fff"/></svg></div><div class="fav" style="left:1529.6px;width:12.0px"><svg viewBox="0 0 20 20" style="left:-3.6px"><path d="M4.4 1.2h5.3l4.6 8.8-4.6 8.8H4.4z" fill="#6e6f73"/><path d="M11.6 1H13.3Q16.4 3 16.4 6.5V8.9L15.5 8.7Z" fill="#0a64c0"/><path d="M11.6 19H13.3Q16.4 17 16.4 13.5V11.1L15.5 11.3Z" fill="#0a64c0"/></svg></div><div class="fav" style="left:1548.6px;width:12.0px"><svg viewBox="0 0 20 20" style="left:-3.6px"><rect x="0" y="0" width="20" height="20" fill="#cf3a0c"/><text x="3" y="17.6" font-family="Liberation Serif" font-size="20.5" fill="#fff" textLength="15" lengthAdjust="spacingAndGlyphs">BI</text></svg></div><div class="fav" style="left:1567.6px;width:12.0px"><svg viewBox="0 0 20 20" style="left:-3.6px"><rect x="3.2" y="3.2" width="13.6" height="13.6" rx="1" fill="#f00"/><path d="M8 7l5.2 3L8 13z" fill="#fff"/></svg></div><svg class="a" style="left:1463px;top:0" width="53" height="43" viewBox="0 0 53 43"><path d="M0 43q6 0 6-7V10Q6 0 16 0h21q10 0 10 10v26q0 7 6 7z" fill="#35363a"/></svg><svg class="a" style="left:1482px;top:15px" width="13" height="12" viewBox="0 0 13 12"><path d="M1.5 1l10 10M11.5 1l-10 10" stroke="#e8eaed" stroke-width="1.8"/></svg><svg class="a" style="left:1603px;top:13px" width="16" height="16" viewBox="0 0 16 16"><path d="M8 1v14M1 8h14" stroke="#fff" stroke-width="2.2"/></svg><svg class="a" style="left:1712px;top:14px" width="15" height="9" viewBox="0 0 15 9"><path d="M1 1l6.5 6.5L14 1" stroke="#e8eaed" stroke-width="1" fill="none"/></svg><div class="a" style="left:1770px;top:18px;width:13px;height:1.3px;background:#e8eaed"></div><svg class="a" style="left:1826px;top:11px" width="15" height="15" viewBox="0 0 15 15"><rect x="1" y="3.5" width="10.5" height="10.5" rx="1.5" fill="none" stroke="#e8eaed" stroke-width="1.1"/><path d="M3.5 1.5h7.5q2.5 0 2.5 2.5v7.5" fill="none" stroke="#e8eaed" stroke-width="1.1"/></svg><svg class="a" style="left:1884px;top:11px" width="15" height="15" viewBox="0 0 15 15"><path d="M1 1l13 13M14 1L1 14" stroke="#e8eaed" stroke-width="1.1"/></svg></div><div id="tb" class="a"><svg class="a" style="left:18px;top:13px" width="20" height="18" viewBox="0 0 20 18"><path d="M18 9H3M9.5 2L2.5 9l7 7" stroke="#9aa0a6" stroke-width="1.9" fill="none"/></svg><svg class="a" style="left:58px;top:13px" width="20" height="18" viewBox="0 0 20 18"><path d="M2 9h15M10.5 2l7 7-7 7" stroke="#9aa0a6" stroke-width="1.9" fill="none"/></svg><svg class="a" style="left:98px;top:13px" width="20" height="18" viewBox="0 0 20 18"><path d="M16.2 10.5A7 7 0 1 1 14.5 4" stroke="#e8eaed" stroke-width="1.9" fill="none"/><path d="M18 1v7h-7z" fill="#e8eaed"/></svg><div class="a" style="left:135px;top:5px;width:1543px;height:35px;border-radius:17.5px;background:#202124"></div><svg class="a" style="left:151px;top:15px" width="13" height="16" viewBox="0 0 13 16"><path d="M3.5 7V4.8a3 3 0 0 1 6 0V7" stroke="#9aa0a6" stroke-width="1.7" fill="none"/><rect x="1" y="7" width="11" height="8" rx="1.2" fill="#9aa0a6"/></svg><div class="a" id="url" style="left:177px;top:8px;height:30px;line-height:30px;font-size:18.1px;white-space:nowrap;color:#9aa0a6"><span style="color:#e8eaed">scb.se</span>/en/finding-statistics/statistics-by-subject-area/population/population-composition/population-statistics/pong/tables-and-graphs/population-statistics---month-quarter-...</div><svg class="a" style="left:1565px;top:13px" width="20" height="19" viewBox="0 0 20 19"><circle cx="7.5" cy="7.5" r="6" stroke="#c4c7ca" stroke-width="1.6" fill="none"/><path d="M12 12l5.5 5.5" stroke="#c4c7ca" stroke-width="2.2"/><path d="M7.5 4.5v6M4.5 7.5h6" stroke="#c4c7ca" stroke-width="1.6"/></svg><svg class="a" style="left:1605px;top:13px" width="21" height="19" viewBox="0 0 21 19"><path d="M1.5 6v11.5h14.5" stroke="#c4c7ca" stroke-width="1.5" fill="none"/><path d="M4.5 12.5q1-7 9.5-6.5V2l5.5 5.5-5.5 5V9q-6-.5-9.5 3.5z" stroke="#c4c7ca" stroke-width="1.4" fill="none" stroke-linejoin="round"/></svg><svg class="a" style="left:1645px;top:13px" width="20" height="19" viewBox="0 0 20 19"><path d="M10 1.5l2.6 5.6 6 .6-4.5 4 1.3 6L10 14.6l-5.4 3.1 1.3-6-4.5-4 6-.6z" stroke="#c4c7ca" stroke-width="1.5" fill="none" stroke-linejoin="round"/></svg><svg class="a" style="left:1694px;top:13px" width="22" height="18" viewBox="0 0 22 18"><path d="M1 2h12M1 7h12M1 12h8" stroke="#e8eaed" stroke-width="1.9"/><path d="M17 14V1.5h3.5" stroke="#e8eaed" stroke-width="1.9" fill="none"/><circle cx="15" cy="14.3" r="2.8" fill="#e8eaed"/></svg><div class="a" style="left:1736px;top:13px;width:18px;height:18px;background:#e8eaed"></div><div class="a" style="left:1739px;top:16px;width:8px;height:12px;background:#35363a"></div><div class="a" style="left:1771px;top:8px;width:28px;height:28px;border-radius:14px;background:#202124"></div><svg class="a" style="left:1776px;top:13px" width="18" height="18" viewBox="0 0 18 18"><circle cx="9" cy="5" r="3.6" fill="#fff"/><path d="M1 16.5q0-6 8-6t8 6z" fill="#fff"/></svg><div class="a" style="left:1808px;top:5px;width:103px;height:35px;border-radius:17.5px;background:#3e3637;border:1.2px solid #e6958c"></div><div class="a" style="left:1824px;top:6.5px;height:33px;line-height:33px;font-size:15.6px;color:#f28b82">Update</div><div class="a" style="left:1891px;top:14px;width:3.6px;height:3.6px;border-radius:2px;background:#f28b82"></div><div class="a" style="left:1891px;top:20px;width:3.6px;height:3.6px;border-radius:2px;background:#f28b82"></div><div class="a" style="left:1891px;top:26.5px;width:3.6px;height:3.6px;border-radius:2px;background:#f28b82"></div></div><div class="a" style="left:203px;top:288px;width:1270px;height:55px;background:#f5f4fa"></div><div class="a" style="left:203px;top:400px;width:1270px;height:56px;background:#f5f4fa"></div><div class="a" style="left:203px;top:513px;width:1270px;height:56px;background:#f5f4fa"></div><div class="a" style="left:203px;top:626px;width:1270px;height:55px;background:#f5f4fa"></div><div class="a" style="left:203px;top:739px;width:1270px;height:55px;background:#f5f4fa"></div><div class="a" style="left:203px;top:851px;width:1270px;height:56px;background:#f5f4fa"></div><div class="a" style="left:203px;top:964px;width:1270px;height:56px;background:#f5f4fa"></div><div class="hl" style="left:203px;top:90px;width:1270px"></div><div class="hl" style="left:203px;top:287px;width:1270px"></div><div class="hl" style="left:203px;top:343px;width:1270px"></div><div class="hl" style="left:203px;top:399px;width:1270px"></div><div class="hl" style="left:203px;top:456px;width:1270px"></div><div class="hl" style="left:203px;top:512px;width:1270px"></div><div class="hl" style="left:203px;top:569px;width:1270px"></div><div class="hl" style="left:203px;top:625px;width:1270px"></div><div class="hl" style="left:203px;top:681px;width:1270px"></div><div class="hl" style="left:203px;top:738px;width:1270px"></div><div class="hl" style="left:203px;top:794px;width:1270px"></div><div class="hl" style="left:203px;top:850px;width:1270px"></div><div class="hl" style="left:203px;top:907px;width:1270px"></div><div class="hl" style="left:203px;top:963px;width:1270px"></div><div class="vl" style="left:332px;top:89px;height:931px"></div><div class="vl" style="left:454px;top:89px;height:931px"></div><div class="vl" style="left:574px;top:89px;height:931px"></div><div class="vl" style="left:671px;top:89px;height:931px"></div><div class="vl" style="left:748px;top:89px;height:931px"></div><div class="vl" style="left:834px;top:89px;height:931px"></div><div class="vl" style="left:954px;top:89px;height:931px"></div><div class="vl" style="left:1079px;top:89px;height:931px"></div><div class="vl" style="left:1193px;top:89px;height:931px"></div><div class="vl" style="left:1318px;top:89px;height:931px"></div><div class="t b" style="left:215px;top:301.60px;letter-spacing:-0.75px;">Unknown</div><div class="t r" style="right:1478px;top:301.60px">.</div><div class="t r" style="right:1358px;top:301.60px">.</div><div class="t r" style="right:1261px;top:301.60px">.</div><div class="t r" style="right:1184px;top:301.60px">.</div><div class="t r" style="right:1098px;top:301.60px">289</div><div class="t r" style="right:978px;top:301.60px">-289</div><div class="t r" style="right:853px;top:301.60px">.</div><div class="t r" style="right:739px;top:301.60px">.</div><div class="t r" style="right:614px;top:301.60px">.</div><div class="t r" style="right:459px;top:301.60px">8 379</div><div class="t b" style="left:215px;top:357.93px;letter-spacing:-0.667px;">January</div><div class="t r" style="right:1478px;top:357.93px">10 389 134</div><div class="t r" style="right:1358px;top:357.93px">9 839</div><div class="t r" style="right:1261px;top:357.93px">9 071</div><div class="t r" style="right:1184px;top:357.93px">42</div><div class="t r" style="right:1098px;top:357.93px">10 180</div><div class="t r" style="right:978px;top:357.93px">-1 109</div><div class="t r" style="right:853px;top:357.93px">7 097</div><div class="t r" style="right:739px;top:357.93px">4 239</div><div class="t r" style="right:614px;top:357.93px">2 858</div><div class="t r" style="right:459px;top:357.93px">.</div><div class="t b" style="left:215px;top:414.27px;letter-spacing:-0.786px;">February</div><div class="t r" style="right:1478px;top:414.27px">10 392 954</div><div class="t r" style="right:1358px;top:414.27px">3 820</div><div class="t r" style="right:1261px;top:414.27px">8 989</div><div class="t r" style="right:1184px;top:414.27px">23</div><div class="t r" style="right:1098px;top:414.27px">7 558</div><div class="t r" style="right:978px;top:414.27px">1 431</div><div class="t r" style="right:853px;top:414.27px">6 089</div><div class="t r" style="right:739px;top:414.27px">3 700</div><div class="t r" style="right:614px;top:414.27px">2 389</div><div class="t r" style="right:459px;top:414.27px">.</div><div class="t b" style="left:215px;top:470.60px;letter-spacing:0.125px;">March</div><div class="t r" style="right:1478px;top:470.60px">10 398 007</div><div class="t r" style="right:1358px;top:470.60px">5 053</div><div class="t r" style="right:1261px;top:470.60px">10 067</div><div class="t r" style="right:1184px;top:470.60px">34</div><div class="t r" style="right:1098px;top:470.60px">7 809</div><div class="t r" style="right:978px;top:470.60px">2 258</div><div class="t r" style="right:853px;top:470.60px">7 011</div><div class="t r" style="right:739px;top:470.60px">4 216</div><div class="t r" style="right:614px;top:470.60px">2 795</div><div class="t r" style="right:459px;top:470.60px">.</div><div class="t b" style="left:215px;top:526.93px;letter-spacing:-0.625px;">April</div><div class="t r" style="right:1478px;top:526.93px">10 403 311</div><div class="t r" style="right:1358px;top:526.93px">5 304</div><div class="t r" style="right:1261px;top:526.93px">9 823</div><div class="t r" style="right:1184px;top:526.93px">31</div><div class="t r" style="right:1098px;top:526.93px">7 316</div><div class="t r" style="right:978px;top:526.93px">2 507</div><div class="t r" style="right:853px;top:526.93px">6 430</div><div class="t r" style="right:739px;top:526.93px">3 633</div><div class="t r" style="right:614px;top:526.93px">2 797</div><div class="t r" style="right:459px;top:526.93px">.</div><div class="t b" style="left:215px;top:583.27px;letter-spacing:0.25px;">May</div><div class="t r" style="right:1478px;top:583.27px">10 409 352</div><div class="t r" style="right:1358px;top:583.27px">6 041</div><div class="t r" style="right:1261px;top:583.27px">10 322</div><div class="t r" style="right:1184px;top:583.27px">35</div><div class="t r" style="right:1098px;top:583.27px">7 265</div><div class="t r" style="right:978px;top:583.27px">3 057</div><div class="t r" style="right:853px;top:583.27px">6 540</div><div class="t r" style="right:739px;top:583.27px">3 556</div><div class="t r" style="right:614px;top:583.27px">2 984</div><div class="t r" style="right:459px;top:583.27px">.</div><div class="t b" style="left:215px;top:639.60px;letter-spacing:-0.667px;">June</div><div class="t r" style="right:1478px;top:639.60px">10 416 550</div><div class="t r" style="right:1358px;top:639.60px">7 198</div><div class="t r" style="right:1261px;top:639.60px">10 216</div><div class="t r" style="right:1184px;top:639.60px">31</div><div class="t r" style="right:1098px;top:639.60px">6 609</div><div class="t r" style="right:978px;top:639.60px">3 607</div><div class="t r" style="right:853px;top:639.60px">7 636</div><div class="t r" style="right:739px;top:639.60px">4 045</div><div class="t r" style="right:614px;top:639.60px">3 591</div><div class="t r" style="right:459px;top:639.60px">.</div><div class="t b" style="left:215px;top:695.93px;letter-spacing:-0.667px;">July</div><div class="t r" style="right:1478px;top:695.93px">10 424 936</div><div class="t r" style="right:1358px;top:695.93px">8 386</div><div class="t r" style="right:1261px;top:695.93px">10 325</div><div class="t r" style="right:1184px;top:695.93px">39</div><div class="t r" style="right:1098px;top:695.93px">7 021</div><div class="t r" style="right:978px;top:695.93px">3 304</div><div class="t r" style="right:853px;top:695.93px">8 902</div><div class="t r" style="right:739px;top:695.93px">3 820</div><div class="t r" style="right:614px;top:695.93px">5 082</div><div class="t r" style="right:459px;top:695.93px">.</div><div class="t b" style="left:215px;top:752.27px;letter-spacing:-0.9px;">August</div><div class="t r" style="right:1478px;top:752.27px">10 436 560</div><div class="t r" style="right:1358px;top:752.27px">11 624</div><div class="t r" style="right:1261px;top:752.27px">10 082</div><div class="t r" style="right:1184px;top:752.27px">22</div><div class="t r" style="right:1098px;top:752.27px">7 035</div><div class="t r" style="right:978px;top:752.27px">3 047</div><div class="t r" style="right:853px;top:752.27px">13 095</div><div class="t r" style="right:739px;top:752.27px">4 518</div><div class="t r" style="right:614px;top:752.27px">8 577</div><div class="t r" style="right:459px;top:752.27px">.</div><div class="t b" style="left:215px;top:808.60px;letter-spacing:-0.562px;">September</div><div class="t r" style="right:1478px;top:808.60px">10 444 467</div><div class="t r" style="right:1358px;top:808.60px">7 907</div><div class="t r" style="right:1261px;top:808.60px">9 419</div><div class="t r" style="right:1184px;top:808.60px">28</div><div class="t r" style="right:1098px;top:808.60px">7 161</div><div class="t r" style="right:978px;top:808.60px">2 258</div><div class="t r" style="right:853px;top:808.60px">10 795</div><div class="t r" style="right:739px;top:808.60px">5 146</div><div class="t r" style="right:614px;top:808.60px">5 649</div><div class="t r" style="right:459px;top:808.60px">.</div><div class="t b" style="left:215px;top:864.93px;letter-spacing:-0.75px;">October</div><div class="t r" style="right:1478px;top:864.93px">10 449 882</div><div class="t r" style="right:1358px;top:864.93px">5 415</div><div class="t r" style="right:1261px;top:864.93px">9 316</div><div class="t r" style="right:1184px;top:864.93px">26</div><div class="t r" style="right:1098px;top:864.93px">7 541</div><div class="t r" style="right:978px;top:864.93px">1 775</div><div class="t r" style="right:853px;top:864.93px">7 901</div><div class="t r" style="right:739px;top:864.93px">4 261</div><div class="t r" style="right:614px;top:864.93px">3 640</div><div class="t r" style="right:459px;top:864.93px">.</div><div class="t b" style="left:215px;top:921.27px;letter-spacing:-0.429px;">November</div><div class="t r" style="right:1478px;top:921.27px">10 452 404</div><div class="t r" style="right:1358px;top:921.27px">2 522</div><div class="a" style="left:611px;top:922px;width:48px;height:28px;background:#3390ff"></div><div class="t r" style="right:1261px;top:921.27px;color:#fff">8 492</div><div class="t r" style="right:1184px;top:921.27px">29</div><div class="t r" style="right:1098px;top:921.27px">7 632</div><div class="t r" style="right:978px;top:921.27px">860</div><div class="t r" style="right:853px;top:921.27px">5 250</div><div class="t r" style="right:739px;top:921.27px">3 588</div><div class="t r" style="right:614px;top:921.27px">1 662</div><div class="t r" style="right:459px;top:921.27px">.</div><div class="t b" style="left:215px;top:977.60px;letter-spacing:-0.429px;">December</div><div class="t r" style="right:1478px;top:977.60px">10 452 326</div><div class="t r" style="right:1358px;top:977.60px">-78</div><div class="t r" style="right:1261px;top:977.60px">8 141</div><div class="t r" style="right:1184px;top:977.60px">27</div><div class="t r" style="right:1098px;top:977.60px">8 542</div><div class="t r" style="right:978px;top:977.60px">-401</div><div class="t r" style="right:853px;top:977.60px">3 885</div><div class="t r" style="right:739px;top:977.60px">3 562</div><div class="t r" style="right:614px;top:977.60px">323</div><div class="t r" style="right:459px;top:977.60px">.</div><div class="t b" style="left:215px;top:217.60px;letter-spacing:0.05px;">2021 (final</div><div class="t b" style="left:215px;top:243.60px;letter-spacing:-0.25px;">statistics)</div><div class="a" style="left:203px;top:106px;width:1270px;height:121px;background:#fff;border-top:2px solid #1e00be;border-bottom:2px solid #1e00be"></div><div class="vl" style="left:332px;top:89px;height:931px"></div><div class="vl" style="left:454px;top:89px;height:931px"></div><div class="vl" style="left:574px;top:89px;height:931px"></div><div class="vl" style="left:671px;top:89px;height:931px"></div><div class="vl" style="left:748px;top:89px;height:931px"></div><div class="vl" style="left:834px;top:89px;height:931px"></div><div class="vl" style="left:954px;top:89px;height:931px"></div><div class="vl" style="left:1079px;top:89px;height:931px"></div><div class="vl" style="left:1193px;top:89px;height:931px"></div><div class="vl" style="left:1318px;top:89px;height:931px"></div><div class="t b" style="left:215px;top:127.60px;letter-spacing:-0.056px;">Year/Month</div><div class="t b" style="left:346px;top:127.60px;letter-spacing:-0.5px;">Population</div><div class="t b" style="left:346px;top:156.00px;letter-spacing:-0.389px;">at the end</div><div class="t b" style="left:346px;top:182.80px;letter-spacing:-0.562px;">of period</div><div class="t b" style="left:468px;top:127.60px;letter-spacing:-0.5px;">Population</div><div class="t b" style="left:468px;top:160.80px;letter-spacing:-0.7px;">growth</div><div class="t b" style="left:588px;top:127.60px;letter-spacing:-0.5px;">Live</div><div class="t b" style="left:588px;top:156.00px;letter-spacing:-0.4px;">births</div><div class="t b" style="left:685px;top:127.60px;letter-spacing:-0.25px;">Still</div><div class="t b" style="left:685px;top:156.00px;letter-spacing:-0.4px;">births</div><div class="t b" style="left:762px;top:127.60px;letter-spacing:-0.5px;">Deaths</div><div class="t b" style="left:848px;top:127.60px;letter-spacing:-0.5px;">Population</div><div class="t b" style="left:848px;top:156.00px;letter-spacing:-0.75px;">surplus</div><div class="t b" style="left:968px;top:127.60px;letter-spacing:-0.333px;">Immigrants</div><div class="t b" style="left:1093px;top:127.60px;letter-spacing:-0.562px;">Emigrants</div><div class="t b" style="left:1207px;top:127.60px;letter-spacing:-0.667px;">Surplus of</div><div class="t b" style="left:1207px;top:156.00px;letter-spacing:-0.333px;">immigrants</div><div class="t b" style="left:1332px;top:127.60px;letter-spacing:-0.5px;">Adjustments</div><div class="a" style="left:332px;top:106px;width:1px;height:2px;background:rgba(30,0,190,.7)"></div><div class="a" style="left:332px;top:225px;width:1px;height:2px;background:rgba(30,0,190,.7)"></div><div class="a" style="left:454px;top:106px;width:1px;height:2px;background:rgba(30,0,190,.7)"></div><div class="a" style="left:454px;top:225px;width:1px;height:2px;background:rgba(30,0,190,.7)"></div><div class="a" style="left:574px;top:106px;width:1px;height:2px;background:rgba(30,0,190,.7)"></div><div class="a" style="left:574px;top:225px;width:1px;height:2px;background:rgba(30,0,190,.7)"></div><div class="a" style="left:671px;top:106px;width:1px;height:2px;background:rgba(30,0,190,.7)"></div><div class="a" style="left:671px;top:225px;width:1px;height:2px;background:rgba(30,0,190,.7)"></div><div class="a" style="left:748px;top:106px;width:1px;height:2px;background:rgba(30,0,190,.7)"></div><div class="a" style="left:748px;top:225px;width:1px;height:2px;background:rgba(30,0,190,.7)"></div><div class="a" style="left:834px;top:106px;width:1px;height:2px;background:rgba(30,0,190,.7)"></div><div class="a" style="left:834px;top:225px;width:1px;height:2px;background:rgba(30,0,190,.7)"></div><div class="a" style="left:954px;top:106px;width:1px;height:2px;background:rgba(30,0,190,.7)"></div><div class="a" style="left:954px;top:225px;width:1px;height:2px;background:rgba(30,0,190,.7)"></div><div class="a" style="left:1079px;top:106px;width:1px;height:2px;background:rgba(30,0,190,.7)"></div><div class="a" style="left:1079px;top:225px;width:1px;height:2px;background:rgba(30,0,190,.7)"></div><div class="a" style="left:1193px;top:106px;width:1px;height:2px;background:rgba(30,0,190,.7)"></div><div class="a" style="left:1193px;top:225px;width:1px;height:2px;background:rgba(30,0,190,.7)"></div><div class="a" style="left:1318px;top:106px;width:1px;height:2px;background:rgba(30,0,190,.7)"></div><div class="a" style="left:1318px;top:225px;width:1px;height:2px;background:rgba(30,0,190,.7)"></div><div class="t" style="left:528px;top:159px;font-size:16px;line-height:20px">[1 ]</div><div class="a" style="left:528px;top:188px;width:22px;height:1px;background:#c3bbf0"></div><div class="t" style="left:1442px;top:125.5px;font-size:16px;line-height:20px">[2]</div><div class="a" style="left:1442px;top:154px;width:18px;height:1px;background:#c3bbf0"></div><div class="a" style="left:1899px;top:89px;width:21px;height:931px;background:#f1f1f1"></div><svg class="a" style="left:1904px;top:97px" width="11" height="7" viewBox="0 0 11 7"><path d="M.5 6.5L5.5 1l5 5.5z" fill="#505050"/></svg><svg class="a" style="left:1904px;top:1006px" width="11" height="7" viewBox="0 0 11 7"><path d="M.5.5h10L5.5 6z" fill="#505050"/></svg><div class="a" style="left:1901px;top:296px;width:17px;height:70px;background:#c1c1c1"></div></body></html>
